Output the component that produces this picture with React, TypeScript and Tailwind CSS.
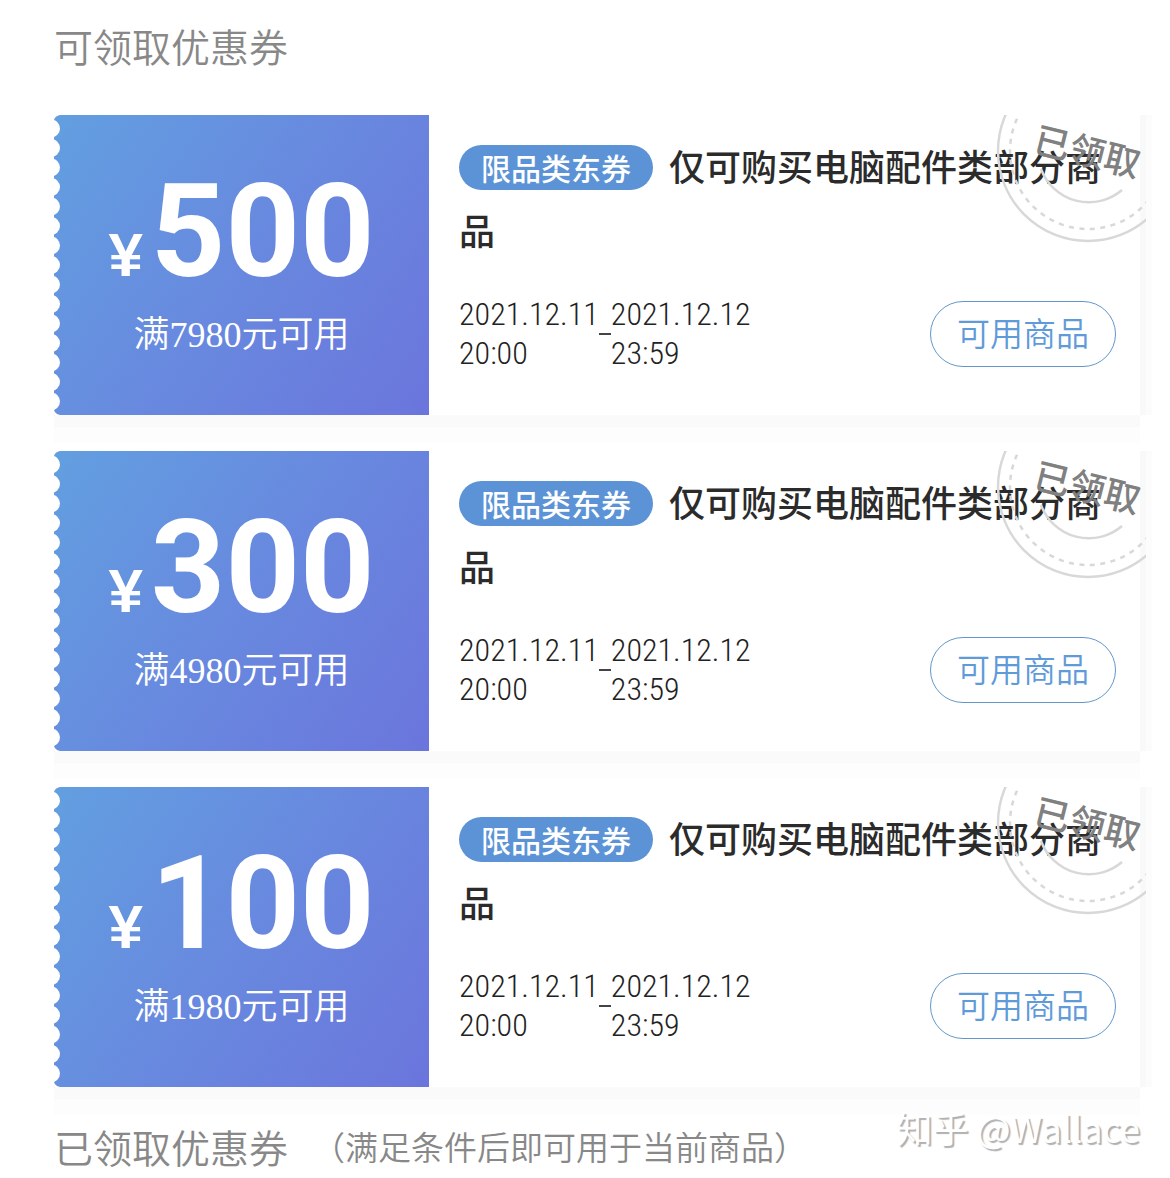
interface Coupon {
  amount: number
  threshold: number
}

const coupons: Coupon[] = [
  { amount: 500, threshold: 7980 },
  { amount: 300, threshold: 4980 },
  { amount: 100, threshold: 1980 },
]

// Perforated left edge of the ticket
const Scallops = () => (
  <svg className="absolute left-0 top-0" width="6" height="300" viewBox="0 0 6 300" aria-hidden="true">
    <path d="M0 0H6Q1 1 0 5Z M0 300H6Q1 299 0 295Z" fill="#fff" />
    {[...Array(15)].map((_, i) => (
      <circle key={i} cx="-3" cy={13.5 + i * 19.5} r="9" fill="#fff" />
    ))}
  </svg>
)

const Stamp = () => (
  <div className="pointer-events-none absolute -right-[6px] top-0 h-[130px] w-[150px]">
    <svg width="150" height="130" viewBox="0 0 150 130" fill="none" stroke="#d8d8d8" aria-hidden="true">
      <circle cx="92" cy="36" r="90" strokeWidth="2.5" />
      <circle cx="92" cy="36" r="78" strokeWidth="2.5" strokeDasharray="5 5.5" />
      <path d="M45 54A51 51 0 0 0 126 75" strokeWidth="2.5" />
    </svg>
    <span className="absolute left-[38px] top-[16px] rotate-[14deg] whitespace-nowrap text-[36px] font-medium leading-[36px] text-[#808080]">
      已领取
    </span>
  </div>
)

const CouponCard = ({ amount, threshold }: Coupon) => (
  <li className="relative flex h-[300px] bg-white shadow-[6px_0_0_#f9f9f9,0_12px_0_#fafafa,12px_0_0_#fcfcfc,0_28px_0_#fdfdfd]">
    <div className="relative w-[375px] shrink-0 bg-[linear-gradient(125deg,#629fe0_0%,#6889df_50%,#6b75dc_100%)] pt-[52px] text-center text-white">
      <Scallops />
      <div className="flex items-baseline justify-center gap-2 font-[Roboto,sans-serif] font-bold">
        <span className="font-['Liberation_Sans',sans-serif] text-[62px] leading-none">¥</span>
        <span className="text-[130px] leading-none">{amount}</span>
      </div>
      <p className="mt-[14px] font-['Liberation_Serif','Noto_Sans_CJK_SC',serif] text-[36px] font-[350] leading-[48px]">
        满{threshold}元可用
      </p>
    </div>

    <div className="flex min-w-0 flex-1 flex-col justify-between pb-[42px] pl-[30px] pr-6 pt-[18px]">
      <h3 className="text-[36px] font-medium leading-[64px] text-[#2b2b2b]">
        <span className="mr-4 inline-block rounded-full bg-[#5b93d6] px-[22px] align-[1px] text-[30px] leading-[45px] text-white">
          限品类东券
        </span>
        仅可购买电脑配件类部分商品
      </h3>
      <div className="flex items-center justify-between">
        <div className="flex items-center font-['Roboto_Condensed',Roboto,sans-serif] text-[32px] font-light leading-[39px] text-[#222]">
          <time dateTime="2021-12-11T20:00">
            2021.12.11
            <br />
            20:00
          </time>
          <span className="h-[2px] w-3 bg-[#444]" />
          <time dateTime="2021-12-12T23:59">
            2021.12.12
            <br />
            23:59
          </time>
        </div>
        <button
          type="button"
          className="h-[66px] w-[186px] rounded-full border border-[#6496cc] pb-1 text-[33px] font-[350] leading-[60px] text-[#5f9bd8]"
        >
          可用商品
        </button>
      </div>
    </div>
    <Stamp />
  </li>
)

const App = () => {
  return (
    <main className="relative min-h-screen overflow-hidden bg-white pl-[54px] pr-[30px] pt-[18px] font-['Noto_Sans_CJK_SC',sans-serif]">
      <h2 className="mb-[42px] text-[39px] font-[350] leading-[55px] text-[#888]">可领取优惠券</h2>

      <ul className="flex flex-col gap-9">
        {coupons.map((coupon) => (
          <CouponCard key={coupon.amount} {...coupon} />
        ))}
      </ul>

      <footer className="relative mt-8 flex items-center font-[350] text-[#888]">
        <h2 className="text-[39px] leading-[55px]">已领取优惠券</h2>
        <span className="ml-6 text-[33px]">（满足条件后即可用于当前商品）</span>
        <span className="absolute -top-[18px] right-0 text-[36px] font-normal leading-[52px] text-white [text-shadow:2px_2px_1px_#b0b0b0]">
          知乎 @Wallace
        </span>
      </footer>
    </main>
  )
}

export default App
